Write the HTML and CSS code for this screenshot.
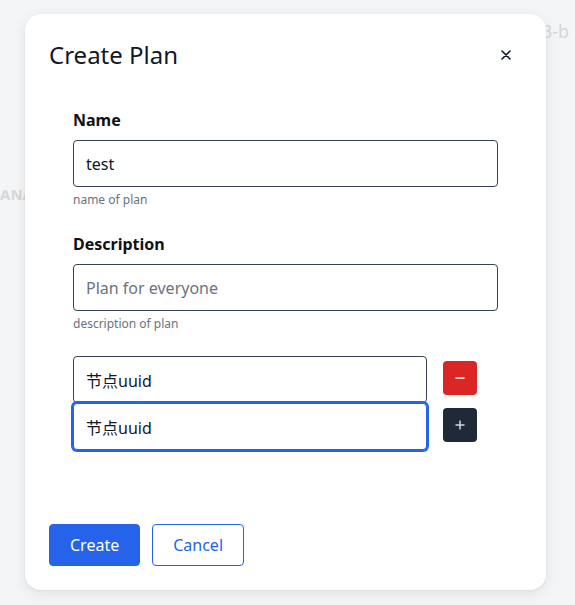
FILE: index.html
```html
<!DOCTYPE html>
<html lang="en">
<head>
<meta charset="utf-8">
<title>Create Plan</title>
<link rel="stylesheet" href="styles.css">
</head>
<body>
<div class="page">
  <div class="bg-top">3-b</div>
  <div class="bg-side">ANALYTICS</div>
</div>
<div class="modal">
  <div class="modal-head">
    <h2 class="modal-title">Create Plan</h2>
    <button class="close" type="button" aria-label="Close">
      <svg width="10" height="10" viewBox="0 0 10 10"><path d="M1 1L9 9M9 1L1 9" stroke="#111827" stroke-width="1.6" stroke-linecap="round"/></svg>
    </button>
  </div>
  <form class="form">
    <div class="field">
      <label class="label">Name</label>
      <input class="input" value="test">
      <div class="help">name of plan</div>
    </div>
    <div class="field">
      <label class="label">Description</label>
      <input class="input" placeholder="Plan for everyone">
      <div class="help">description of plan</div>
    </div>
    <div class="nodes">
      <div class="node-row">
        <input class="input node-input" value="节点uuid">
        <button class="icon-btn danger" type="button" aria-label="Remove">
          <svg width="10" height="10" viewBox="0 0 10 10"><path d="M0.5 5H9.5" stroke="#fecaca" stroke-width="2"/></svg>
        </button>
      </div>
      <div class="node-row">
        <input class="input node-input focused" value="节点uuid">
        <button class="icon-btn dark" type="button" aria-label="Add">
          <svg width="10" height="10" viewBox="0 0 10 10"><path d="M0.5 5H9.5M5 0.5V9.5" stroke="#d1d5db" stroke-width="1.5"/></svg>
        </button>
      </div>
    </div>
  </form>
  <div class="footer">
    <button class="btn primary" type="button">Create</button>
    <button class="btn outline" type="button">Cancel</button>
  </div>
</div>
</body>
</html>
```

FILE: styles.css
```css
* { box-sizing: border-box; }
html, body { margin: 0; padding: 0; }
body {
  width: 575px;
  height: 605px;
  overflow: hidden;
  background: #f4f5f7;
  font-family: "Noto Sans", "Noto Sans CJK SC", sans-serif;
  color: #111827;
}
.page {
  padding-top: 19px;
}
.bg-top {
  padding-left: 542px;
  font-size: 18px;
  line-height: 24px;
  color: #d6d7da;
  white-space: nowrap;
}
.bg-side {
  margin-top: 141px;
  font-size: 15px;
  font-weight: 700;
  line-height: 20px;
  color: #d6d7da;
  white-space: nowrap;
}
.modal {
  position: absolute;
  top: 14px;
  left: 25px;
  width: 521px;
  height: 576px;
  background: #fff;
  border-radius: 16px;
  box-shadow: 0 4px 14px rgba(0, 0, 0, 0.08), 0 1px 3px rgba(0, 0, 0, 0.05);
  padding: 25px 24px 24px;
}
.modal-head {
  display: flex;
  align-items: center;
  justify-content: space-between;
}
.modal-title {
  margin: 0;
  font-size: 24px;
  line-height: 32px;
  font-weight: 400;
  color: #111827;
}
.close {
  width: 32px;
  height: 32px;
  border: 0;
  background: transparent;
  display: flex;
  align-items: center;
  justify-content: center;
  padding: 0;
}
.form {
  margin: 37px 24px 0;
}
.field {
  margin-bottom: 24px;
}
.label {
  display: block;
  font-size: 16px;
  line-height: 24px;
  font-weight: 700;
  color: #111;
  margin-bottom: 8px;
}
.input {
  display: block;
  width: 100%;
  height: 47px;
  border: 1px solid #374151;
  border-radius: 4px;
  padding: 0 12px;
  font-family: "Noto Sans", "Noto Sans CJK SC", sans-serif;
  font-size: 16px;
  color: #111827;
  background: #fff;
  outline: none;
}
.input::placeholder { color: #6b7280; opacity: 1; }
.help {
  margin-top: 5px;
  font-size: 12px;
  line-height: 16px;
  color: #6b7280;
}
.node-row {
  display: flex;
  align-items: flex-start;
  gap: 16px;
}
.node-input {
  width: 354px;
  flex: none;
}
.node-input.focused {
  border-color: #2563eb;
  box-shadow: 0 0 0 2px #2563eb;
}
.icon-btn {
  width: 34px;
  height: 34px;
  margin-top: 5px;
  border: 0;
  border-radius: 4px;
  display: flex;
  align-items: center;
  justify-content: center;
  padding: 0;
}
.icon-btn.danger { background: #dc2626; }
.icon-btn.dark { background: #1f2937; }
.footer {
  margin-top: 74px;
  display: flex;
  gap: 12px;
}
.btn {
  height: 42px;
  padding: 0 20px;
  border-radius: 4px;
  font-family: "Noto Sans", "Noto Sans CJK SC", sans-serif;
  font-size: 16px;
  line-height: 24px;
}
.btn.primary {
  background: #2563eb;
  border: 1px solid #2563eb;
  color: #fff;
}
.btn.outline {
  background: #fff;
  border: 1px solid #2563eb;
  color: #2563eb;
}
```
